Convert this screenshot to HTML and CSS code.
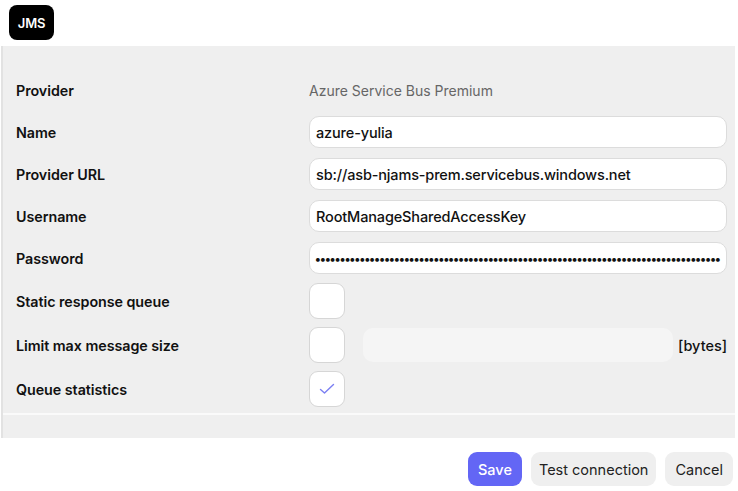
FILE: index.html
```html
<!DOCTYPE html>
<html>
<head>
<meta charset="utf-8">
<link rel="stylesheet" href="styles.css">
</head>
<body>
<div class="page">
  <header class="top">
    <div class="badge">JMS</div>
  </header>
  <section class="panel">
    <div class="form">
      <div class="row">
        <div class="label">Provider</div>
        <div class="value">Azure Service Bus Premium</div>
      </div>
      <div class="row">
        <div class="label">Name</div>
        <div class="input">azure-yulia</div>
      </div>
      <div class="row">
        <div class="label">Provider URL</div>
        <div class="input">sb://asb-njams-prem.servicebus.windows.net</div>
      </div>
      <div class="row">
        <div class="label">Username</div>
        <div class="input">RootManageSharedAccessKey</div>
      </div>
      <div class="row">
        <div class="label">Password</div>
        <div class="input password">••••••••••••••••••••••••••••••••••••••••••••••••••••••••••••••••••••••••••••••••••</div>
      </div>
      <div class="row crow">
        <div class="label">Static response queue</div>
        <div class="check"></div>
      </div>
      <div class="row crow">
        <div class="label">Limit max message size</div>
        <div class="limit">
          <div class="check"></div>
          <div class="disabled"></div>
          <div class="unit">[bytes]</div>
        </div>
      </div>
      <div class="row crow">
        <div class="label">Queue statistics</div>
        <div class="check">
          <svg width="16" height="12" viewBox="0 0 16 12"><path d="M1.5 6.5 L5.5 10 L14.5 1.5" fill="none" stroke="#7b7ff2" stroke-width="1.4" stroke-linecap="round" stroke-linejoin="round"/></svg>
        </div>
      </div>
    </div>
    <div class="panel-foot"></div>
  </section>
  <footer class="actions">
    <button class="btn primary">Save</button>
    <button class="btn test">Test connection</button>
    <button class="btn">Cancel</button>
  </footer>
</div>
</body>
</html>
```
FILE: styles.css
```css
* { box-sizing: border-box; }
html, body { margin: 0; padding: 0; background: #fff; }
body {
  font-family: "Inter", "Open Sans", sans-serif;
  color: #111;
  width: 738px;
  height: 491px;
  overflow: hidden;
}
.page { display: flex; flex-direction: column; }
.top { height: 46px; padding: 5px 0 0 9px; }
.badge {
  width: 45px; height: 35px;
  background: #000; color: #fff;
  border-radius: 8px;
  display: flex; align-items: center; justify-content: center;
  font-weight: 600; font-size: 13px; letter-spacing: -0.2px;
}
.panel {
  margin: 0 3px 0 1px;
  background: #efefef;
  border-left: 2px solid #e2e2e2;
  display: flex; flex-direction: column;
}
.form {
  padding: 28px 8px 6px 13px;
  display: flex; flex-direction: column; gap: 10px;
  border-bottom: 2px solid #fafafa;
}
.row {
  display: grid;
  grid-template-columns: 293px 1fr;
  align-items: center;
  height: 32px;
}
.crow { height: 36px; }
.row + .crow { margin-top: -1px; }
.crow + .crow { margin-top: -2px; }
.label { font-size: 14.3px; font-weight: 600; color: #111; letter-spacing: -0.05px; }
.value { font-size: 14px; color: #666; }
.input {
  height: 32px;
  background: #fff;
  border: 1px solid #dcdcdc;
  border-radius: 10px;
  padding: 0 6px;
  display: flex; align-items: center;
  font-size: 14.5px; font-weight: 500; color: #111;
  white-space: nowrap; overflow: hidden;
  letter-spacing: -0.15px;
}
.password { font-size: 12px; letter-spacing: -0.75px; padding-left: 5px; font-weight: 700; }
.check {
  width: 36px; height: 36px;
  background: #fff;
  border: 1px solid #d6d6d6;
  border-radius: 9px;
  display: flex; align-items: center; justify-content: center;
}
.limit { display: flex; align-items: center; }
.disabled {
  margin-left: 18px;
  width: 310px; height: 34px;
  background: #f5f5f5;
  border-radius: 10px;
}
.unit { margin-left: 5px; font-size: 14.5px; font-weight: 500; }
.panel-foot { height: 23px; }
.actions {
  display: flex; justify-content: flex-end; gap: 9px;
  padding: 14px 5px 0 0;
}
.btn {
  font-family: inherit;
  height: 34px;
  border: none;
  border-radius: 9px;
  background: #efefef;
  color: #222;
  font-size: 14.5px;
  padding: 0 10px;
  cursor: pointer;
}
.test { padding: 0 8px; }
.primary { background: #6366f5; color: #fff; font-weight: 500; }
```
